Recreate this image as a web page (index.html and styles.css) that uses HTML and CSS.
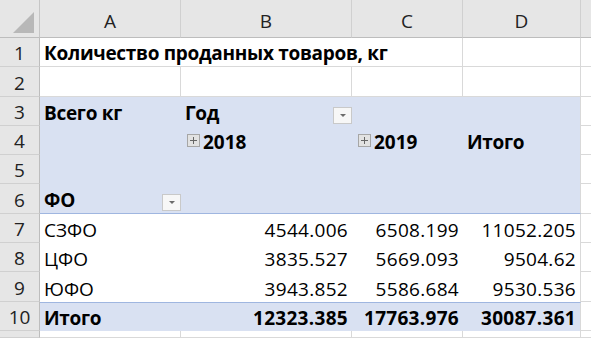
FILE: index.html
```html
<!DOCTYPE html>
<html>
<head>
<meta charset="utf-8">
<link rel="stylesheet" href="styles.css">
</head>
<body>
<div class="sheet">
  <div class="corner"><svg class="tri" width="22" height="22" viewBox="0 0 22 22"><polygon points="21,0 21,21 0,21" fill="#b8b8b8"/></svg></div>
  <div class="ch">A</div><div class="ch">B</div><div class="ch">C</div><div class="ch">D</div><div class="ch ch-e"></div>

  <div class="rh">1</div>
  <div class="c title">Количество проданных товаров, кг</div>
  <div class="c"></div><div class="c e"></div>

  <div class="rh">2</div>
  <div class="c"></div><div class="c"></div><div class="c"></div><div class="c"></div><div class="c e"></div>

  <div class="rh">3</div>
  <div class="p b cy">Всего кг</div>
  <div class="p b cy split"><span>Год</span><span class="dd"><svg width="8" height="5" viewBox="0 0 8 5"><polygon points="1,1 7,1 4,4" fill="#6b6b6b"/></svg></span></div>
  <div class="p"></div><div class="p d"></div><div class="c e"></div>

  <div class="rh">4</div>
  <div class="p"></div>
  <div class="p b yr"><svg class="plus" width="13" height="13" viewBox="0 0 13 13"><rect x="0.5" y="0.5" width="12" height="12" fill="#e2e2e2" stroke="#a6a6a6"/><path d="M3 6.5H10M6.5 3V10" stroke="#666" stroke-width="1"/></svg><span>2018</span></div>
  <div class="p b yr"><svg class="plus" width="13" height="13" viewBox="0 0 13 13"><rect x="0.5" y="0.5" width="12" height="12" fill="#e2e2e2" stroke="#a6a6a6"/><path d="M3 6.5H10M6.5 3V10" stroke="#666" stroke-width="1"/></svg><span>2019</span></div>
  <div class="p b cy d">Итого</div><div class="c e"></div>

  <div class="rh">5</div>
  <div class="p"></div><div class="p"></div><div class="p"></div><div class="p d"></div><div class="c e"></div>

  <div class="rh">6</div>
  <div class="p b split hb"><span>ФО</span><span class="dd"><svg width="8" height="5" viewBox="0 0 8 5"><polygon points="1,1 7,1 4,4" fill="#6b6b6b"/></svg></span></div>
  <div class="p hb"></div><div class="p hb"></div><div class="p hb d"></div><div class="c e"></div>

  <div class="rh">7</div>
  <div class="w">СЗФО</div><div class="w n">4544.006</div><div class="w n">6508.199</div><div class="w n d">11052.205</div><div class="c e"></div>

  <div class="rh">8</div>
  <div class="w">ЦФО</div><div class="w n">3835.527</div><div class="w n">5669.093</div><div class="w n d">9504.62</div><div class="c e"></div>

  <div class="rh">9</div>
  <div class="w">ЮФО</div><div class="w n">3943.852</div><div class="w n">5586.684</div><div class="w n d">9530.536</div><div class="c e"></div>

  <div class="rh">10</div>
  <div class="p b cy tb">Итого</div><div class="p b n tb">12323.385</div><div class="p b n tb">17763.976</div><div class="p b n tb d">30087.361</div><div class="c e"></div>

  <div class="rh"></div>
  <div class="c"></div><div class="c"></div><div class="c"></div><div class="c"></div><div class="c e"></div>
</div>
</body>
</html>
```
FILE: styles.css
```css
html, body {
  margin: 0;
  padding: 0;
  background: #ffffff;
}
body {
  font-family: "Open Sans", "Noto Sans", sans-serif;
  font-size: 19px;
  color: #000;
}
.sheet {
  display: grid;
  grid-template-columns: 40px 141px 171px 111px 118px 1fr;
  grid-template-rows: 38px repeat(10, 29.3px) 1fr;
  width: 591px;
  height: 338px;
  overflow: hidden;
}
.sheet > div {
  box-sizing: border-box;
  min-width: 0;
  line-height: 24px;
  white-space: nowrap;
}
.corner {
  background: #e6e6e6;
  border-right: 1px solid #c6c6c6;
  border-bottom: 1px solid #bdbdbd;
  display: flex;
  align-items: flex-end;
  justify-content: flex-end;
  padding: 0 4px 3px 0;
}
.tri { display: block; }
.ch {
  background: #e6e6e6;
  border-right: 1px solid #d0d0d0;
  border-bottom: 1px solid #bdbdbd;
  display: flex;
  align-items: flex-end;
  justify-content: center;
  padding-bottom: 4px;
  color: #222;
}
.ch-e { border-right: none; }
.rh {
  background: #e6e6e6;
  border-right: 1px solid #bdbdbd;
  border-bottom: 1px solid #d0d0d0;
  display: flex;
  align-items: flex-end;
  justify-content: center;
  padding-bottom: 1px;
  color: #222;
}
.c {
  border-right: 1px solid #d9d9d9;
  border-bottom: 1px solid #d9d9d9;
  display: flex;
  align-items: flex-end;
  padding: 0 4px 1px 4px;
}
.c.e { border-right: none; }
.title {
  grid-column: span 3;
  font-weight: 700;
  letter-spacing: -0.3px;
}
.p {
  background: #d9e1f2;
  display: flex;
  align-items: flex-end;
  padding: 0 4px 1px 4px;
}
.w {
  background: #fff;
  display: flex;
  align-items: flex-end;
  padding: 0 4px 1px 4px;
}
.d { border-right: 1px solid #d9d9d9; }
.b { font-weight: 700; }
.cy { letter-spacing: -0.3px; }
.n { justify-content: flex-end; letter-spacing: 0.3px; }
.split {
  justify-content: space-between;
  padding-right: 0;
  padding-bottom: 2px;
}
.split > span:first-child { margin-bottom: -1px; }
.dd {
  width: 19px;
  height: 17px;
  box-sizing: border-box;
  background: #f7f7f7;
  border: 1px solid #c9c9c9;
  display: flex;
  align-items: center;
  justify-content: center;
  letter-spacing: 0;
}
.dd svg { display: block; }
.hb { border-bottom: 1px solid #9fb6e0; }
.tb { border-top: 1px solid #9fb6e0; }
.yr { padding-left: 6px; }
.plus {
  display: block;
  margin: 0 3px 7px 0;
  flex: none;
}
```
